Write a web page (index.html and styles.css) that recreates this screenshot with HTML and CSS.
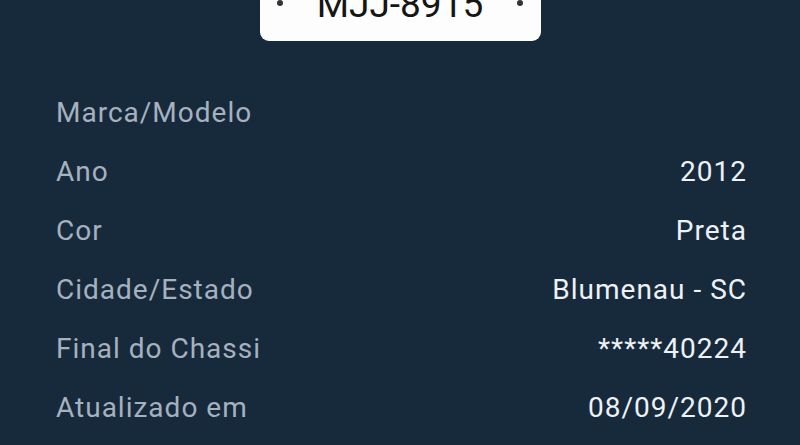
FILE: index.html
```html
<!DOCTYPE html>
<html lang="pt-BR">

<head>
    <meta charset="UTF-8">
    <meta name="viewport" content="width=device-width, initial-scale=1.0">
    <title>Consulta de veículo</title>
    <link rel="stylesheet" href="styles.css">
</head>

<body>
    <div class="plate-wrap">
        <div class="plate">
            <span class="plate-dot"></span>
            <span class="plate-number">MJJ-8915</span>
            <span class="plate-dot"></span>
        </div>
    </div>
    <ul class="info-list">
        <li class="info-row"><span class="info-label">Marca/Modelo</span><span class="info-value"></span></li>
        <li class="info-row"><span class="info-label">Ano</span><span class="info-value">2012</span></li>
        <li class="info-row"><span class="info-label">Cor</span><span class="info-value">Preta</span></li>
        <li class="info-row"><span class="info-label">Cidade/Estado</span><span class="info-value">Blumenau - SC</span></li>
        <li class="info-row"><span class="info-label">Final do Chassi</span><span class="info-value">*****40224</span></li>
        <li class="info-row"><span class="info-label">Atualizado em</span><span class="info-value">08/09/2020</span></li>
    </ul>
</body>

</html>
```

FILE: styles.css
```css
/* tela de detalhes do veículo */
body {
    margin: 0;
    background: #172a3c;
    font-family: Roboto, "Liberation Sans", sans-serif;
    overflow: hidden;
}

.plate-wrap {
    display: flex;
    justify-content: center;
}

/* placa: o topo fica fora da tela */
.plate {
    width: 281px;
    height: 60px;
    margin-top: -19px;
    box-sizing: border-box;
    padding: 0 17px 0 17px;
    background: #fdfdfd;
    border-radius: 9px;
    display: flex;
    justify-content: space-between;
    align-items: flex-start;
}

.plate-dot {
    width: 6px;
    height: 6px;
    margin-top: 19px;
    border-radius: 50%;
    background: #333;
}

.plate-number {
    font-size: 37px;
    line-height: 37px;
    padding-top: 5px;
    color: #151515;
}

.info-list {
    list-style: none;
    margin: 42px 0 0 0;
    padding: 0 53px 0 56px;
}

.info-row {
    display: flex;
    justify-content: space-between;
    height: 59px;
    line-height: 59px;
    font-size: 28px;
    letter-spacing: 1px;
}

.info-label {
    color: #a6b1bf;
}

.info-value {
    color: #eef1f5;
}
```
